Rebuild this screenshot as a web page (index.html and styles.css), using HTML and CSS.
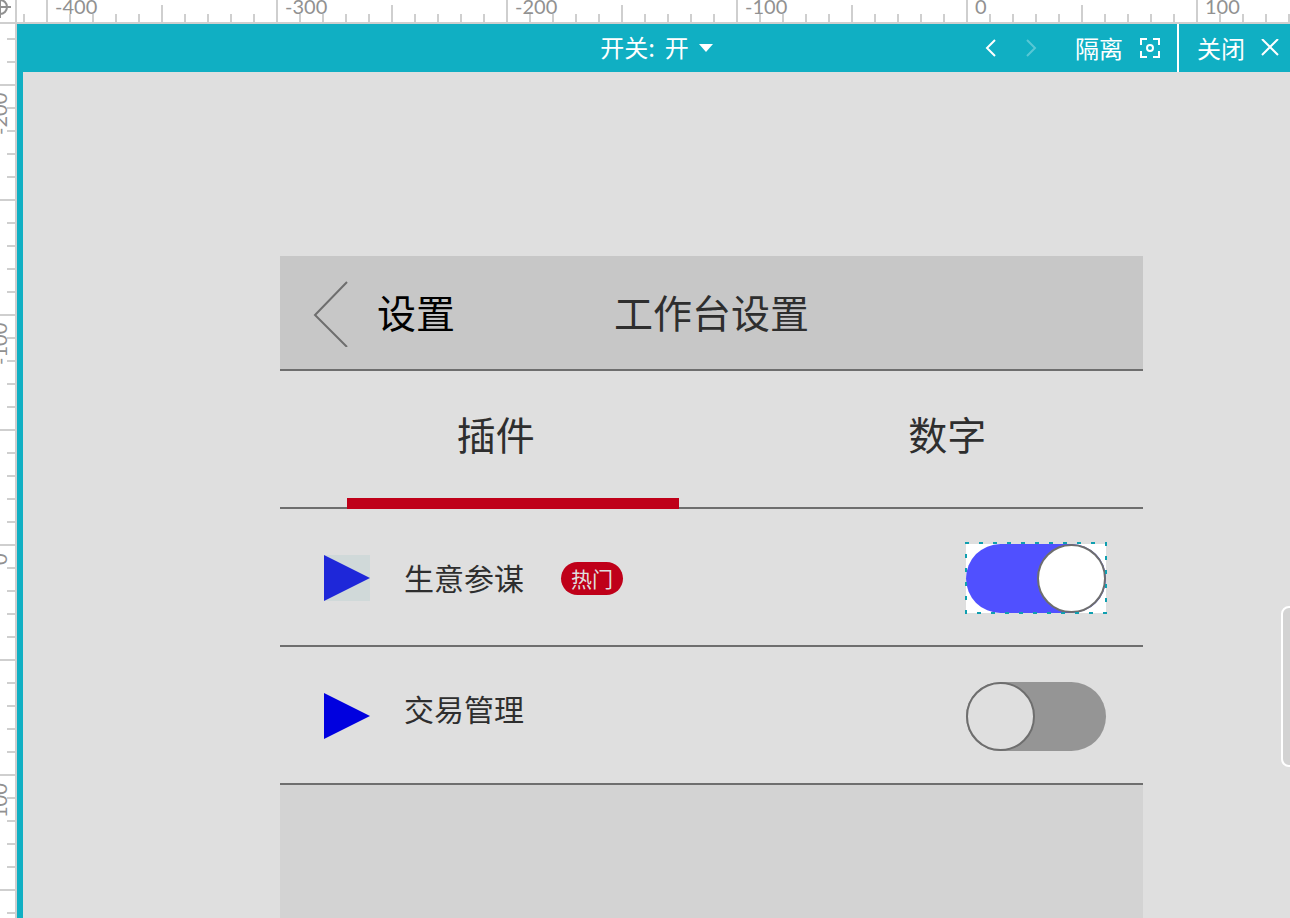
FILE: index.html
```html
<!DOCTYPE html>
<html lang="zh-CN">
<head>
    <meta charset="UTF-8">
    <meta name="viewport" content="width=device-width, initial-scale=1.0">
    <title>工作台设置</title>
    <link rel="stylesheet" href="styles.css">
</head>
<body>
    <div class="ruler-top">
        <div class="corner">
            <svg width="16" height="22" viewBox="0 0 16 22">
                <circle cx="0" cy="7" r="7"/>
                <path d="M0 0V18M0 7H11"/>
            </svg>
        </div>
        <div class="ticks-x">
            <span>-400</span>
            <span>-300</span>
            <span>-200</span>
            <span>-100</span>
            <span>0</span>
            <span>100</span>
        </div>
    </div>

    <div class="workspace">
        <div class="ruler-left">
            <span>-200</span>
            <span>-100</span>
            <span>0</span>
            <span>100</span>
        </div>

        <main class="editor">
            <div class="toolbar">
                <div class="state">
                    <label for="state-select">开关:</label>
                    <select id="state-select">
                        <option>开</option>
                        <option>关</option>
                    </select>
                    <svg class="caret" width="14" height="8" viewBox="0 0 14 8"><path d="M0 0H14L7 8Z"/></svg>
                </div>
                <div class="actions">
                    <button class="nav" aria-label="上一个">
                        <svg width="12" height="18" viewBox="0 0 12 18"><path d="M10 1L2 9L10 17"/></svg>
                    </button>
                    <button class="nav" aria-label="下一个" disabled>
                        <svg width="12" height="18" viewBox="0 0 12 18"><path d="M2 1L10 9L2 17"/></svg>
                    </button>
                    <button class="isolate">
                        隔离
                        <svg width="22" height="22" viewBox="0 0 22 22">
                            <path d="M2 8V2H8M14 2H20V8M20 14V20H14M8 20H2V14"/>
                            <circle cx="11" cy="11" r="3"/>
                        </svg>
                    </button>
                    <button class="close">
                        关闭
                        <svg width="18" height="18" viewBox="0 0 18 18"><path d="M1 0L17 16M17 0L1 16"/></svg>
                    </button>
                </div>
            </div>

            <div class="canvas">
                <section class="screen">
                    <header class="screen-header">
                        <button class="back">
                            <svg width="36" height="68" viewBox="0 0 36 68"><path d="M34 3L2 36L34 68"/></svg>
                            <span>设置</span>
                        </button>
                        <h1>工作台设置</h1>
                    </header>

                    <nav class="tabs">
                        <button class="tab active">插件</button>
                        <button class="tab">数字</button>
                    </nav>

                    <div class="row">
                        <svg class="icon" width="46" height="46" viewBox="0 0 46 46">
                            <path fill="#0000df" d="M0 0L46 23L0 46Z"/>
                            <path fill="#97c4c4" fill-opacity=".2" d="M0 0H46V46H0Z"/>
                        </svg>
                        <label for="plugin-data">生意参谋</label>
                        <span class="badge">热门</span>
                        <div class="toggle selected">
                            <input type="checkbox" id="plugin-data" checked>
                            <svg class="marquee" width="142" height="72" viewBox="0 0 142 72">
                                <path d="M0 1H142M141 0V72M142 71H0M1 72V0"/>
                            </svg>
                        </div>
                    </div>

                    <div class="row raised">
                        <svg class="icon" width="46" height="46" viewBox="0 0 46 46">
                            <path fill="#0000df" d="M0 0L46 23L0 46Z"/>
                        </svg>
                        <label for="plugin-trade">交易管理</label>
                        <div class="toggle">
                            <input type="checkbox" id="plugin-trade">
                        </div>
                    </div>
                </section>
            </div>
            <div class="side-handle"></div>
        </main>
    </div>
</body>
</html>
```
FILE: styles.css
```css
*,
*::before,
*::after {
    box-sizing: border-box;
}
body {
    margin: 0;
    height: 100vh;
    overflow: hidden;
    display: flex;
    flex-direction: column;
    background: #fff;
    color: #2e2e2e;
    font-family: "Noto Sans CJK SC", sans-serif;
}
button,
select {
    padding: 0;
    border: none;
    background: none;
    color: inherit;
    font: inherit;
    cursor: pointer;
}
svg {
    display: block;
    fill: none;
    stroke: currentColor;
    stroke-width: 2;
}

/* rulers */
.ruler-top {
    flex: none;
    display: flex;
    height: 24px;
    color: #919191;
    font: 20px/12px Lato, sans-serif;
}
.corner {
    flex: none;
    width: 17px;
    border-right: 2px solid #cfcfcf;
    border-bottom: 2px solid #cfcfcf;
    overflow: hidden;
}
.ticks-x {
    flex: 1;
    min-width: 0;
    display: flex;
    padding-left: 29px;
    overflow: hidden;
    border-bottom: 2px solid #cfcfcf;
    background:
        linear-gradient(#cfcfcf, #cfcfcf) 6px bottom / 2px 8px no-repeat,
        linear-gradient(90deg, #cfcfcf 2px, transparent 2px) 29px bottom / 23px 8px repeat-x,
        linear-gradient(90deg, #cfcfcf 2px, transparent 2px) 29px bottom / 115px 17px repeat-x,
        linear-gradient(90deg, #cfcfcf 2px, transparent 2px) 29px bottom / 230px 22px repeat-x;
}
.ticks-x span {
    flex: none;
    width: 230px;
    padding-left: 9px;
}
.ruler-left {
    flex: none;
    width: 17px;
    padding-top: 60px;
    overflow: hidden;
    border-right: 2px solid #cfcfcf;
    background:
        linear-gradient(#cfcfcf 2px, transparent 2px) right 60px / 8px 23px repeat-y,
        linear-gradient(#cfcfcf 2px, transparent 2px) right 60px / 15px 115px repeat-y;
    color: #919191;
    font: 20px/14px Lato, sans-serif;
}
.ruler-left span {
    display: block;
    width: 14px;
    height: 230px;
    margin-left: -8px;
    padding-bottom: 9px;
    writing-mode: vertical-rl;
    text-align: right;
    transform: rotate(180deg);
}

/* editor */
.workspace {
    flex: 1;
    min-height: 0;
    display: flex;
}
.editor {
    position: relative;
    flex: 1;
    display: flex;
    flex-direction: column;
    background: #dfdfdf;
    border-left: 6px solid #10afc3;
}
.toolbar {
    flex: none;
    display: grid;
    grid-template-columns: 1fr auto 1fr;
    height: 48px;
    background: #10afc3;
    color: #fff;
    font-size: 24px;
    line-height: 46px;
}
.state {
    grid-column: 2;
    display: flex;
    align-items: center;
    gap: 10px;
}
.state select {
    appearance: none;
    width: 24px;
    height: 48px;
    padding-bottom: 2px;
}
.state label {
    padding-bottom: 2px;
}
.caret {
    fill: currentColor;
    stroke: none;
}
.actions {
    display: flex;
    justify-content: flex-end;
    align-items: center;
}
.actions button {
    display: flex;
    align-items: center;
    gap: 16px;
    height: 48px;
}
.actions .nav {
    margin-right: 28px;
}
.nav:disabled {
    opacity: .3;
}
.isolate {
    margin-left: 10px;
    padding-right: 16px;
}
.close {
    padding: 0 11px 0 18px;
    border-left: 2px solid #fff;
}
.canvas {
    flex: 1;
    display: flex;
    min-height: 0;
    padding: 184px 147px 0 257px;
}
.side-handle {
    position: absolute;
    top: 582px;
    right: -8px;
    width: 17px;
    height: 161px;
    border: 2px solid #fff;
    border-radius: 8px;
    background: #d3d3d3;
}

/* mobile screen */
.screen {
    flex: 1;
    background: #d3d3d3;
}
.screen-header {
    display: grid;
    grid-template-columns: 1fr auto 1fr;
    align-items: center;
    height: 115px;
    padding: 0 33px;
    background: #c7c7c7;
    border-bottom: 2px solid #6e6e6e;
    font-size: 39px;
    line-height: 56px;
}
.back {
    display: flex;
    align-items: center;
    gap: 28px;
    color: #000;
}
.back svg {
    color: #6e6e6e;
}
.back span,
.screen-header h1 {
    padding-bottom: 4px;
}
.screen-header h1 {
    margin: 0;
    font-size: 39px;
    font-weight: 400;
}
.tabs {
    display: grid;
    grid-template-columns: 1fr 1fr;
    height: 138px;
    background: #dfdfdf;
    border-bottom: 2px solid #6e6e6e;
    font-size: 39px;
}
.tab {
    position: relative;
    padding-bottom: 12px;
}
.tab + .tab {
    padding-left: 40px;
}
.tab.active::after {
    content: "";
    position: absolute;
    left: 67px;
    right: 33px;
    bottom: -2px;
    height: 11px;
    background: #bf0019;
}
.row {
    display: flex;
    align-items: center;
    height: 138px;
    padding: 2px 37px 0 44px;
    background: #dfdfdf;
    border-bottom: 2px solid #6e6e6e;
    font-size: 30px;
}
.row label {
    padding-bottom: 2px;
}
.icon {
    margin-right: 34px;
    stroke: none;
}
.raised label {
    padding-bottom: 16px;
}
.badge {
    margin-left: 37px;
    padding: 0 10px;
    border-radius: 17px;
    background: #bf0019;
    color: #dfdfdf;
    font-size: 21px;
    line-height: 33px;
}
.toggle {
    position: relative;
    height: 69px;
    margin-left: auto;
}
.toggle.selected {
    background: #fff;
}
.toggle input {
    appearance: none;
    display: flex;
    width: 140px;
    height: 69px;
    margin: 0;
    border-radius: 35px;
    background: #959595;
    cursor: pointer;
}
.toggle input::before {
    content: "";
    width: 69px;
    height: 69px;
    border: 2px solid #6e6e6e;
    border-radius: 50%;
    background: #dfdfdf;
}
.toggle input:checked {
    justify-content: flex-end;
    background: #5050ff;
}
.toggle input:checked::before {
    background: #fff;
}
.marquee {
    position: absolute;
    top: -2px;
    left: -1px;
    color: #109fb0;
    stroke-dasharray: 4 10;
    pointer-events: none;
}
```
